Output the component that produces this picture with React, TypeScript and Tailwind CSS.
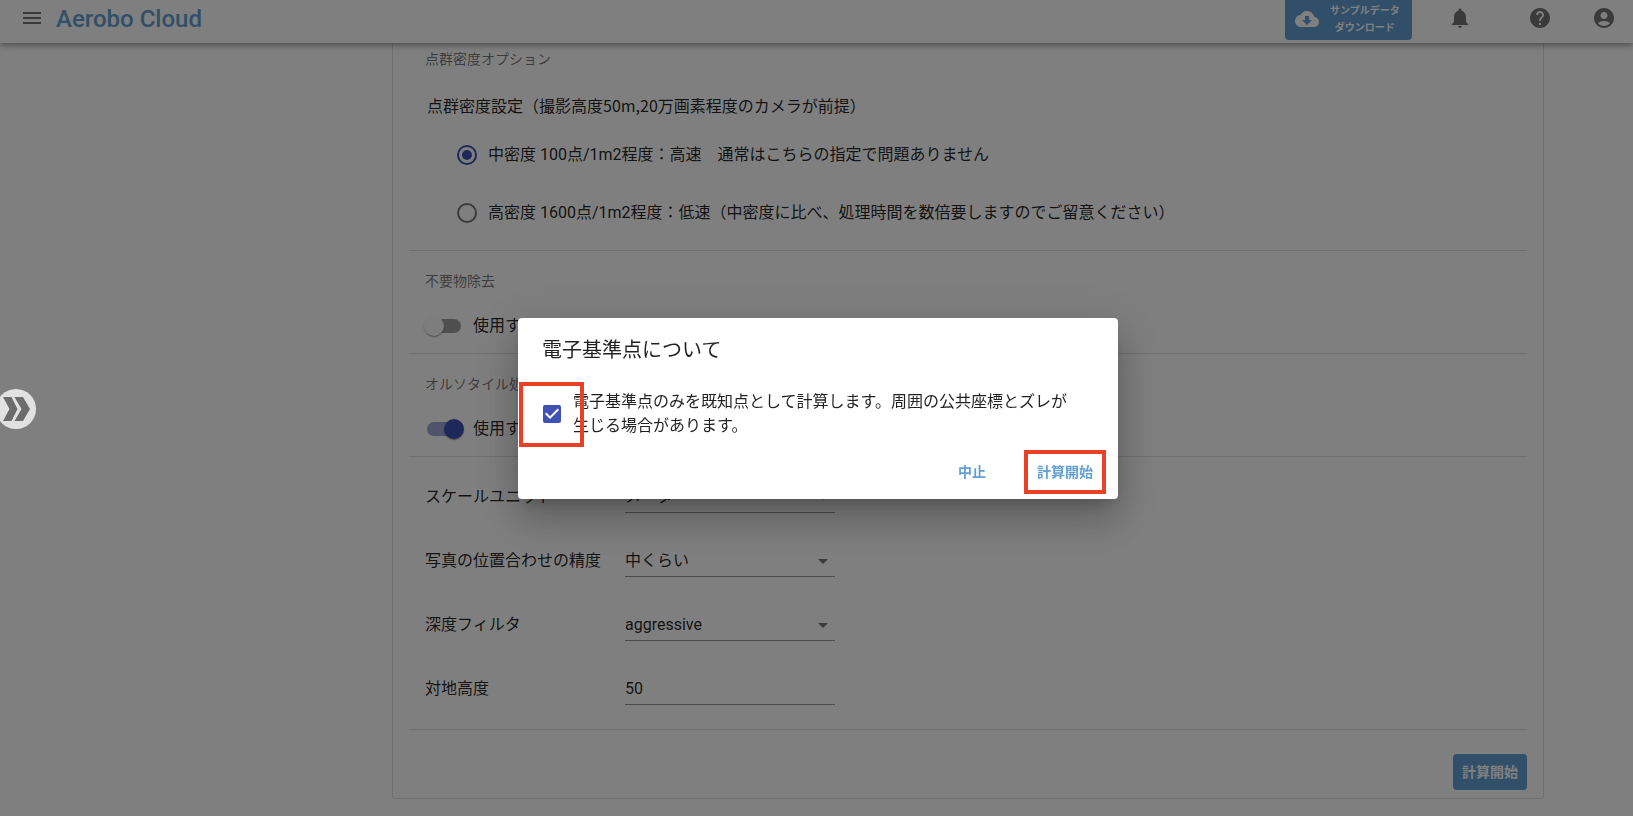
import { useState } from 'react';
import {
  MdAccountCircle,
  MdArrowDropDown,
  MdCheckBox,
  MdCheckBoxOutlineBlank,
  MdCloudDownload,
  MdHelp,
  MdMenu,
  MdNotifications,
} from 'react-icons/md';

type Density = 'middle' | 'high';

const DENSITIES: { value: Density; label: string }[] = [
  { value: 'middle', label: '中密度 100点/1m2程度：高速　通常はこちらの指定で問題ありません' },
  {
    value: 'high',
    label: '高密度 1600点/1m2程度：低速（中密度に比べ、処理時間を数倍要しますのでご留意ください）',
  },
];

function Header() {
  return (
    <header className="relative z-10 flex h-[43px] items-start bg-white pl-2 pr-[5px] shadow-[0_2px_4px_-1px_rgba(0,0,0,0.2),0_4px_5px_0_rgba(0,0,0,0.14),0_1px_10px_0_rgba(0,0,0,0.12)]">
      <button type="button" aria-label="メニュー" className="flex h-9 w-12 items-center justify-center text-black/54">
        <MdMenu size={24} />
      </button>
      <h1 className="flex-1 text-[24px] leading-[38px] font-medium text-[#629fd3]">Aerobo Cloud</h1>
      <button
        type="button"
        className="mr-6 flex h-10 w-[127px] items-center gap-[11px] rounded-b bg-[#629fd3] px-2.5 pb-0.5 text-[10px] leading-[17px] font-bold text-white"
      >
        <MdCloudDownload size={24} className="shrink-0" />
        <span className="text-center whitespace-nowrap">
          サンプルデータ
          <br />
          ダウンロード
        </span>
      </button>
      <button type="button" aria-label="お知らせ" className="mr-8 flex h-9 w-12 items-center justify-center text-black/54">
        <MdNotifications size={24} />
      </button>
      <button type="button" aria-label="ヘルプ" className="mr-4 flex h-9 w-12 items-center justify-center text-black/54">
        <MdHelp size={24} />
      </button>
      <button type="button" aria-label="アカウント" className="flex h-9 w-12 items-center justify-center text-black/54">
        <MdAccountCircle size={24} />
      </button>
    </header>
  );
}

function SwitchSection({ title, initial }: { title: string; initial: boolean }) {
  const [on, setOn] = useState(initial);

  return (
    <section className="border-b border-black/12 px-4 pt-5 pb-2">
      <h2 className="text-[14px] leading-5 text-black/54">{title}</h2>
      <label className="mt-4 flex h-[38px] items-center gap-3 pl-0.5">
        <input
          type="checkbox"
          role="switch"
          checked={on}
          onChange={(e) => setOn(e.target.checked)}
          className="relative h-3.5 w-[34px] appearance-none rounded-full bg-black/38 before:absolute before:-top-[3px] before:-left-[3px] before:size-5 before:rounded-full before:bg-[#fafafa] before:shadow-[0_2px_1px_-1px_rgba(0,0,0,0.2),0_1px_1px_0_rgba(0,0,0,0.14),0_1px_3px_0_rgba(0,0,0,0.12)] checked:bg-[#3f51b5]/50 checked:before:left-[17px] checked:before:bg-[#3f51b5]"
        />
        使用する
      </label>
    </section>
  );
}

function SelectRow({ id, label, options }: { id: string; label: string; options: string[] }) {
  return (
    <div className="flex h-8 items-center">
      <label htmlFor={id} className="w-[200px]">
        {label}
      </label>
      <div className="relative w-[210px]">
        <select id={id} className="h-8 w-full appearance-none border-b border-black/42 pr-6">
          {options.map((option) => (
            <option key={option}>{option}</option>
          ))}
        </select>
        <MdArrowDropDown size={24} className="pointer-events-none absolute top-1 right-0 text-black/54" />
      </div>
    </div>
  );
}

function ConfirmDialog() {
  const [agreed, setAgreed] = useState(true);

  return (
    <div className="fixed inset-0 z-20 flex items-center justify-center bg-black/50 pt-px pl-[3px]">
      <div
        role="dialog"
        aria-labelledby="dialog-title"
        className="h-[181px] w-[600px] rounded bg-white shadow-[0_11px_15px_-7px_rgba(0,0,0,0.2),0_24px_38px_3px_rgba(0,0,0,0.14),0_9px_46px_8px_rgba(0,0,0,0.12)]"
      >
        <h2 id="dialog-title" className="px-6 pt-4 text-[20px] leading-8">
          電子基準点について
        </h2>
        <label className="relative mt-6 flex items-center pr-10 pl-[22px]">
          <input
            type="checkbox"
            checked={agreed}
            onChange={(e) => setAgreed(e.target.checked)}
            className="peer absolute size-6 opacity-0"
          />
          <span className="mr-[9px] text-[#3f51b5]">
            {agreed ? <MdCheckBox size={24} /> : <MdCheckBoxOutlineBlank size={24} />}
          </span>
          <span className="leading-6">
            電子基準点のみを既知点として計算します。周囲の公共座標とズレが生じる場合があります。
          </span>
          {/* highlight frame round the tick box */}
          <span className="absolute -top-2 left-px size-[65px] border-4 border-[#ea4025]" />
        </label>
        <div className="mt-3 flex justify-end gap-5 pr-3 text-[14px] font-bold text-[#629fd3]">
          <button type="button" className="h-11 w-16">
            中止
          </button>
          <button type="button" className="h-11 w-[82px] border-4 border-[#ea4025]">
            計算開始
          </button>
        </div>
      </div>
    </div>
  );
}

export default function App() {
  const [density, setDensity] = useState<Density>('middle');
  const [altitude, setAltitude] = useState('50');

  return (
    <div className="min-h-screen bg-white font-[Roboto,'Noto_Sans_CJK_JP',sans-serif] text-[16px] leading-6 text-black/87">
      <Header />

      <main className="pr-[89px] pb-4 pl-[392px]">
        <form className="rounded-b border border-t-0 border-black/12 px-4" onSubmit={(e) => e.preventDefault()}>
          <section className="border-b border-black/12 px-4 pt-1.5 pb-4">
            <h2 className="text-[14px] leading-5 text-black/54">点群密度オプション</h2>
            <fieldset className="mt-6">
              <legend className="pb-px pl-0.5 font-['Noto_Sans_CJK_JP',sans-serif]">
                点群密度設定（撮影高度50m,20万画素程度のカメラが前提）
              </legend>
              {DENSITIES.map(({ value, label }) => (
                <label key={value} className="mt-4 flex h-[42px] items-center gap-[11px] pl-8">
                  <input
                    type="radio"
                    name="density"
                    checked={density === value}
                    onChange={() => setDensity(value)}
                    className="grid size-5 appearance-none place-items-center rounded-full border-2 border-black/54 before:size-2.5 before:rounded-full checked:border-[#3f51b5] checked:before:bg-[#3f51b5]"
                  />
                  {label}
                </label>
              ))}
            </fieldset>
          </section>

          <SwitchSection title="不要物除去" initial={false} />
          <SwitchSection title="オルソタイル処理" initial />

          <section className="flex flex-col gap-8 border-b border-black/12 px-4 py-6">
            <SelectRow id="scale" label="スケールユニット" options={['メーター', 'フィート']} />
            <SelectRow id="accuracy" label="写真の位置合わせの精度" options={['中くらい', '高い', '低い']} />
            <SelectRow id="depth" label="深度フィルタ" options={['aggressive', 'moderate', 'mild']} />
            <div className="flex h-8 items-center">
              <label htmlFor="altitude" className="w-[200px]">
                対地高度
              </label>
              <input
                id="altitude"
                value={altitude}
                onChange={(e) => setAltitude(e.target.value)}
                className="h-8 w-[210px] border-b border-black/42"
              />
            </div>
          </section>

          <div className="flex justify-end pt-6 pb-2">
            <button type="submit" className="h-9 rounded bg-[#629fd3] px-[9px] text-[14px] font-bold text-white">
              計算開始
            </button>
          </div>
        </form>
      </main>

      <ConfirmDialog />

      <div className="pointer-events-none fixed inset-y-0 -left-1 z-30 flex items-center pt-0.5">
        <button
          type="button"
          aria-label="パネルを開く"
          className="pointer-events-auto size-10 rounded-full bg-[#e1e1e1] text-[#6c6c6c]"
        >
          <svg viewBox="0 0 40 40" fill="currentColor" className="size-10">
            <path d="M7 8h8.5l6 12-6 12H7l6.5-12zM18.5 8H27l7 12-7 12h-8.5l7-12z" />
          </svg>
        </button>
      </div>
    </div>
  );
}
